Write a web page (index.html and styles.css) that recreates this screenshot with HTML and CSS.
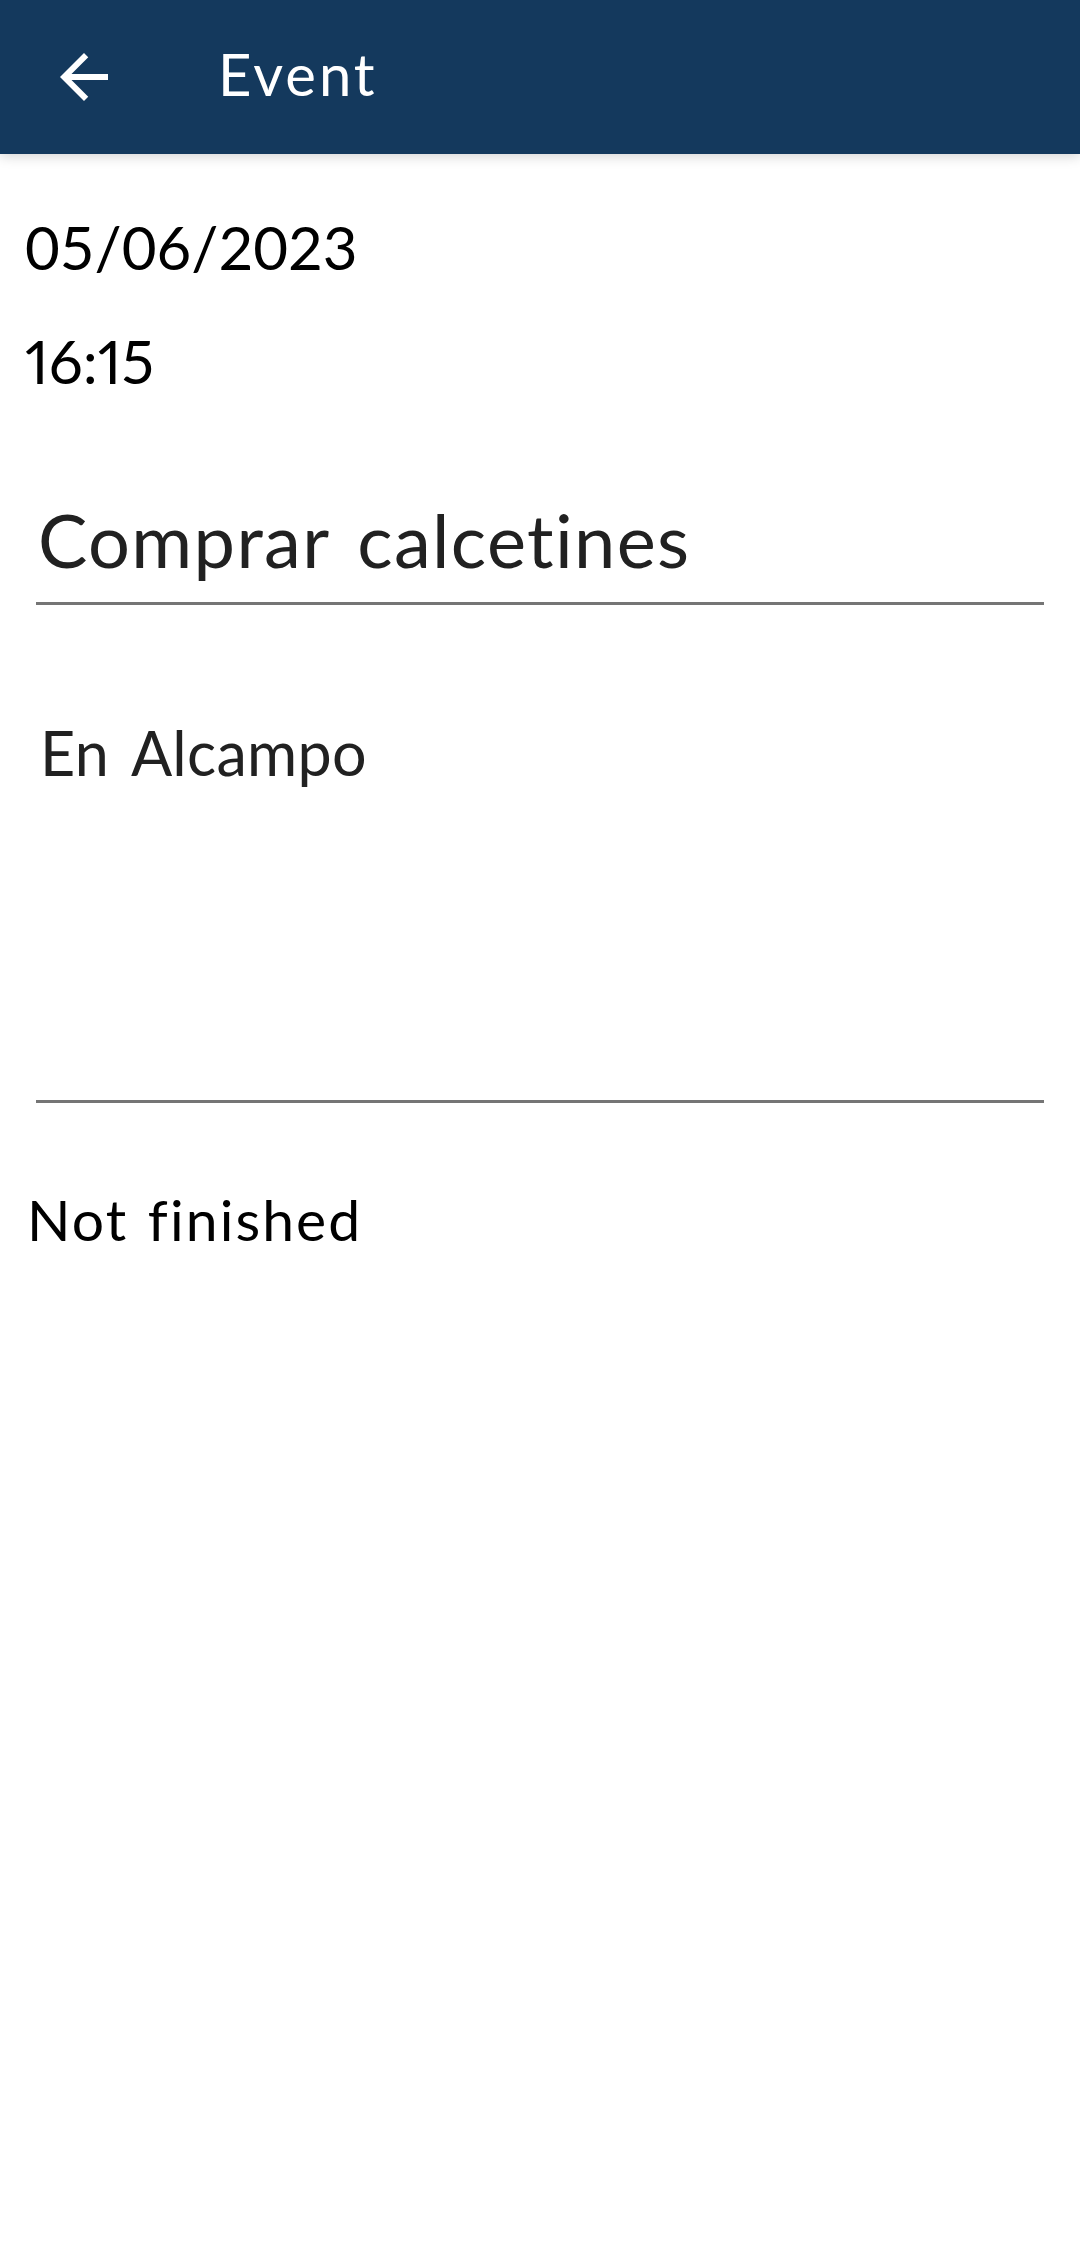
FILE: index.html
```html
<!DOCTYPE html>
<html>
<head>
<meta charset="utf-8">
<link rel="stylesheet" href="styles.css">
</head>
<body>
<header class="appbar">
  <svg class="back" viewBox="0 0 24 24" width="72" height="72"><path fill="#fff" d="M20 11H7.830l5.59-5.59L12 4l-8 8 8 8 1.41-1.41L7.83 13H20v-2z"/></svg>
  <div class="appbar-title">Event</div>
</header>
<main class="content">
  <div class="date">05/06/2023</div>
  <div class="time">16:15</div>
  <div class="field field-title">Comprar calcetines</div>
  <div class="field field-desc">En Alcampo</div>
  <div class="status">Not finished</div>
</main>
</body>
</html>
```
FILE: styles.css
```css
html, body {
  margin: 0;
  padding: 0;
  background: #ffffff;
}
body {
  width: 1080px;
  min-height: 2251px;
  font-family: "Lato", "Liberation Sans", sans-serif;
}
.appbar {
  height: 154px;
  background: #14395d;
  display: flex;
  align-items: center;
  box-shadow: 0 2px 12px rgba(0,0,0,0.18);
  position: relative;
}
.back {
  margin-left: 48px;
  display: block;
}
.appbar-title {
  margin-left: 98px;
  color: #ffffff;
  font-size: 58px;
  line-height: 58px;
  margin-top: -6px;
  letter-spacing: 3px;
}
.date, .time, .status {
  color: #000;
}
.date {
  margin: 63px 0 0 25px;
  font-size: 60px;
  line-height: 60px;
}
.time {
  margin: 54px 0 0 25px;
  font-size: 60px;
  line-height: 60px;
  font-variant-numeric: proportional-nums;
}
.field {
  color: #212121;
  margin-left: 36px;
  margin-right: 36px;
  border-bottom: 3px solid #757575;
  font-variant-ligatures: none;
}
.field-title {
  margin-top: 112px;
  padding: 0 0 25px 2px;
  font-size: 74px;
  line-height: 74px;
  letter-spacing: 1.35px;
  word-spacing: 8px;
}
.field-desc {
  margin-top: 117px;
  padding-left: 4px;
  height: 378px;
  font-size: 61px;
  line-height: 61px;
  letter-spacing: 0.3px;
  word-spacing: 8px;
}
.status {
  margin: 88px 0 0 27px;
  font-size: 57px;
  line-height: 57px;
  letter-spacing: 2.1px;
  word-spacing: 3px;
}
```
